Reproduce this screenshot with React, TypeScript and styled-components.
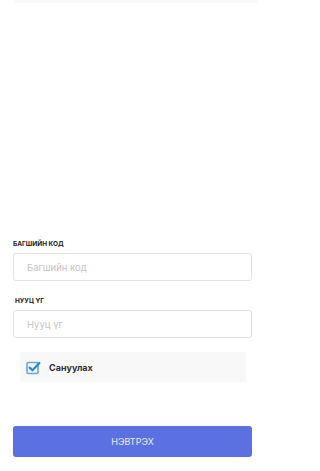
import React, { useState } from 'react';
import styled, { createGlobalStyle } from 'styled-components';

const GlobalStyle = createGlobalStyle`
  html, body {
    margin: 0;
    padding: 0;
    background: #ffffff;
  }
  body {
    font-family: Inter, "Noto Sans", "Liberation Sans", sans-serif;
    -webkit-font-smoothing: antialiased;
  }
`;

const Screen = styled.div`
  width: 265px;
  height: 471px;
  display: flex;
  flex-direction: column;
  box-sizing: border-box;
  overflow: hidden;
`;

const TopEdge = styled.div`
  height: 3px;
  margin: 0 8px 0 15px;
  background: #f9f9f9;
`;

const Form = styled.form`
  display: flex;
  flex-direction: column;
  padding: 0 13px;
  margin-top: 237px;
`;

const Field = styled.div`
  display: flex;
  flex-direction: column;
  & + & {
    margin-top: 16px;
  }
`;

const Label = styled.label<{ $indent?: number }>`
  font-size: 6.5px;
  line-height: 9px;
  font-weight: 700;
  color: #222;
  text-transform: uppercase;
  padding-left: ${p => p.$indent ?? 0}px;
  margin-bottom: 4px;
`;

const Input = styled.input`
  height: 28px;
  box-sizing: border-box;
  border: 1px solid #e3e3e3;
  border-radius: 3px;
  padding: 0 13px;
  font-family: inherit;
  font-size: 9.5px;
  color: #333;
  background: #fff;
  outline: none;

  &::placeholder {
    color: #c4c4c4;
  }
`;

const RememberRow = styled.label`
  display: flex;
  align-items: center;
  gap: 8px;
  height: 30px;
  margin: 14px 6px 0 7px;
  padding: 0 6px;
  background: #f8f8f8;
  border-radius: 2px;
  cursor: pointer;
`;

const RememberText = styled.span`
  font-size: 9px;
  font-weight: 700;
  color: #333;
`;

const SubmitButton = styled.button`
  height: 31px;
  margin-top: 44px;
  border: none;
  border-radius: 3px;
  background: #5b70e1;
  color: #e9ecff;
  font-family: inherit;
  font-size: 9px;
  cursor: pointer;
`;

const CheckIcon: React.FC<{ checked: boolean }> = ({ checked }) => (
  <svg width="15" height="15" viewBox="0 0 15 15">
    <rect x="1" y="2.5" width="11" height="11" rx="1.6" fill="none" stroke="#5aa8e6" strokeWidth="1.6" />
    {checked && (
      <path d="M3.6 7.6 L6.4 10.3 L13.4 3" fill="none" stroke="#2a86d8" strokeWidth="2.2" strokeLinecap="round" strokeLinejoin="round" />
    )}
  </svg>
);

export default function App() {
  const [remember, setRemember] = useState(true);

  return (
    <>
      <GlobalStyle />
      <Screen>
        <TopEdge />
        <Form onSubmit={e => e.preventDefault()}>
          <Field>
            <Label>Багшийн код</Label>
            <Input placeholder="Багшийн код" />
          </Field>
          <Field>
            <Label $indent={2}>Нууц үг</Label>
            <Input type="password" placeholder="Нууц үг" />
          </Field>
          <RememberRow onClick={() => setRemember(!remember)}>
            <CheckIcon checked={remember} />
            <RememberText>Сануулах</RememberText>
          </RememberRow>
          <SubmitButton type="submit">НЭВТРЭХ</SubmitButton>
        </Form>
      </Screen>
    </>
  );
}
